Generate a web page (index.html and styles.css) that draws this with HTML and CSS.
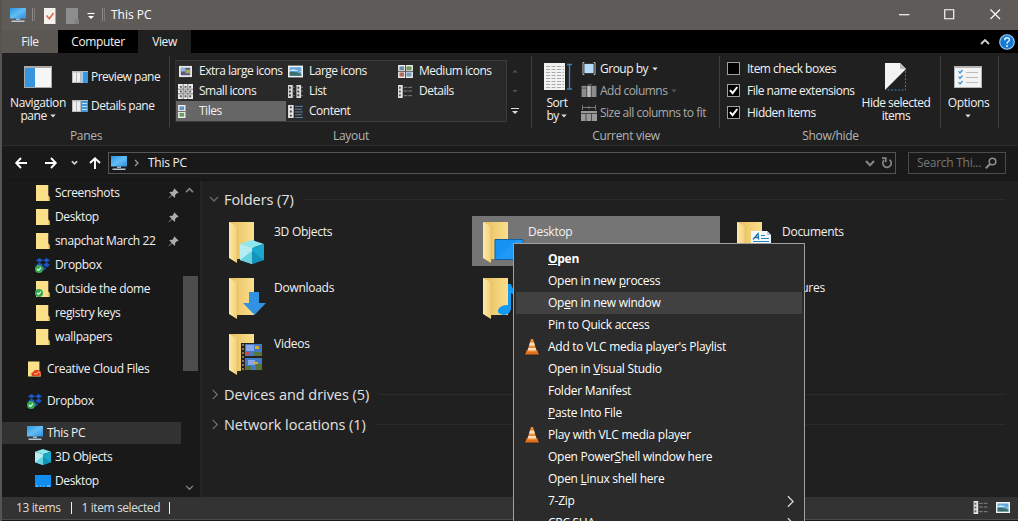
FILE: index.html
```html
<!DOCTYPE html>
<html lang="en">
<head>
<meta charset="utf-8">
<title>This PC</title>
<link rel="stylesheet" href="styles.css">
</head>
<body>
<svg class="defs" aria-hidden="true">
  <defs>
    <linearGradient id="gBlue" x1="0" y1="0" x2="1" y2="1"><stop offset="0" stop-color="#2b95e0"/><stop offset=".5" stop-color="#63bdf5"/><stop offset="1" stop-color="#2c8fdc"/></linearGradient>
    <linearGradient id="gFold" x1="0" y1="0" x2="1" y2="0"><stop offset="0" stop-color="#e6bd5c"/><stop offset="1" stop-color="#fbdf8d"/></linearGradient>
    <linearGradient id="gFlap" x1="0" y1="0" x2="1" y2="0"><stop offset="0" stop-color="#ffe8a6"/><stop offset="1" stop-color="#f3d07b"/></linearGradient>
    <symbol id="pc" viewBox="0 0 16 16"><path fill="url(#gBlue)" d="M0 1h16v10.500H0z"/><path fill="#8fb9d4" d="M6 11.500h4V13H6z"/><path fill="#b8c9d4" d="M1.500 13.500h13V15h-13z"/></symbol>
    <symbol id="folder" viewBox="0 0 14 16"><path fill="#fbe08a" d="M0 0h12.300v10.500L13.500 12v4H0z"/><path fill="#e9c561" d="M11.500 15.500l.8-5 1.200 1.500v4z"/></symbol>
    <symbol id="ok" viewBox="0 0 8 8"><circle cx="4" cy="4" r="4" fill="#39a852"/><path d="M2 4l1.500 1.500L6 2.700" fill="none" stroke="#d8ffe0" stroke-width="1.200"/></symbol>
    <symbol id="dropbox" viewBox="0 0 16 16"><path fill="#1c55c8" d="M4.500 1L8 3.300 4.500 5.600 1 3.300zM11.500 1L15 3.300l-3.500 2.300L8 3.300zM4.500 5.600L8 7.900l-3.500 2.300L1 7.900zM11.500 5.600L15 7.900l-3.500 2.300L8 7.900zM8 9.200l3.500 2.300L8 13.800l-3.500-2.300z"/><use href="#ok" x="0" y="8" width="8" height="8"/></symbol>
    <symbol id="cube" viewBox="0 0 24 24"><path fill="#8be7f0" d="M12 0l12 4-12 4L0 4z"/><path fill="#b5edf3" d="M0 4l12 4v16L0 20z"/><path fill="#19a9cc" d="M24 4L12 8v16l12-4z"/><path fill="#66d3df" d="M0 20l12-9v13z"/><path fill="#0d86ad" d="M24 20l-12-9v13z" opacity=".6"/></symbol>
    <symbol id="desk" viewBox="0 0 16 12"><path fill="#118df0" d="M0 0h16v12H0z"/><path fill="#9bd6ff" d="M1 10.500h2v1H1zm4 0h1v1H5zm3 0h1v1H8zm4 0h3v1h-3z"/></symbol>
    <symbol id="big" viewBox="0 0 36 42"><path fill="url(#gFold)" d="M0 0h25v37H6z"/><path fill="url(#gFlap)" d="M0 0l8 4v37l-8-5z"/><path fill="#d9aa49" d="M7.600 4h.8v35h-.8z" opacity=".4"/></symbol>
    <symbol id="pin" viewBox="0 0 12 12"><path fill="#a9adb2" d="M7 .5L11.500 5l-1 .8-.8-.2-2 2 .2 2-.9.9-2.700-2.700L1 11.300l-.4-.5L3.900 7.400 1.500 5l.9-.9 2 .2 2-2L6.200 1.300z"/></symbol>
    <symbol id="down" viewBox="0 0 6 4"><path d="M.3.500h5.400L3 3.500z" fill="currentColor"/></symbol>
    <symbol id="cv" viewBox="0 0 10 7"><path d="M1 1l4 4 4-4" fill="none" stroke="currentColor" stroke-width="1.500"/></symbol>
    <symbol id="cu" viewBox="0 0 10 7"><path d="M1 6l4-4 4 4" fill="none" stroke="currentColor" stroke-width="1.900"/></symbol>
    <symbol id="cr" viewBox="0 0 8 14"><path d="M1 1l6 6-6 6" fill="none" stroke="currentColor" stroke-width="1.400"/></symbol>
    <symbol id="vlc" viewBox="0 0 14 16"><path fill="#e0701a" d="M1.800 11h10.400L14 15.500H0z"/><path fill="#f08a2c" d="M6 0h2l3.700 12.200q-4.700 1.800-9.400 0z"/><path fill="#f3dcc6" d="M5 3.500h4l1 3.200H4zM3.300 9h7.400l.7 2.400H2.600z"/></symbol>
    <symbol id="list" viewBox="0 0 16 14"><path fill="#dcdcdc" d="M0 0h5v14H0zM9 0h5v14H9z"/><path fill="#444" d="M1 2h2v2H1zm0 4h2v2H1zm0 4h2v2H1zm9-8h2v2h-2zm0 4h2v2h-2zm0 4h2v2h-2z"/><path stroke="#888" d="M5 2.500h2M5 6.500h2M5 11.500h2M14 2.500h2M14 6.500h2M14 11.500h2"/></symbol>
    <symbol id="details" viewBox="0 0 16 14"><path fill="#e4e4e4" d="M0 0h5v14H0z"/><path fill="#666" d="M1 2h2v2H1zm0 4h2v2H1zm0 4h2v2H1z"/><path stroke="#888" stroke-dasharray="4 1" d="M6 2.500h10M6 6.500h10M6 11.500h10"/></symbol>
    <symbol id="photo" viewBox="0 0 14 11"><path fill="#f3f3f3" d="M0 0h14v11H0z"/><path fill="#60a5dc" d="M1.500 1.500h11v8h-11z"/><path fill="#cfe7f5" d="M2 4q4-2 10 2v-1H2z"/><path fill="#3e6e68" d="M1.500 6q5-1 11 2v1.500h-11z"/></symbol>
    <symbol id="cols" viewBox="0 0 16 14"><path fill="#8d8d8d" d="M0 2h16v12H0z"/><path fill="#bcbcbc" d="M6 2h4v12H6z"/><path stroke="#4a4a4a" d="M5.500 2v12M10.500 2v12M0 4.500h5" fill="none"/><path stroke="#666" d="M7 .5h4"/></symbol>
    <symbol id="check" viewBox="0 0 13 13"><path d="M3 6.200l2.600 3L10.300 3" fill="none" stroke="#fff" stroke-width="2"/></symbol>
  </defs>
</svg>

<div class="window">
  <header class="titlebar">
    <svg class="t-pc"><use href="#pc"/></svg>
    <i class="tsep s1"></i>
    <svg class="t-doc" viewBox="0 0 12 16"><path fill="#f4f0ec" d="M0 0h11.500v16H0z"/><path d="M2.500 7.500l2.800 3.300L9.500 5" fill="none" stroke="#d9694a" stroke-width="1.600"/></svg>
    <svg class="t-doc2" viewBox="0 0 14 16"><path fill="#8d8d8d" d="M0 0h12v16H0z"/><path fill="#808080" d="M9 11h4v5H9z"/></svg>
    <svg class="t-drop" viewBox="0 0 8 8"><path stroke="#fff" stroke-width="1.200" d="M.5 1.500h7"/><path fill="#fff" d="M1 4h6L4 7z"/></svg>
    <i class="tsep"></i>
    <span class="title">This PC</span>
    <div class="winbtns">
      <svg viewBox="0 0 11 11"><path stroke="#fff" stroke-width="1.200" d="M0 6h11"/></svg>
      <svg viewBox="0 0 11 11"><path fill="none" stroke="#fff" stroke-width="1.200" d="M.8.800h9.400v9.400H.8z"/></svg>
      <svg viewBox="0 0 11 11"><path stroke="#fff" stroke-width="1.200" d="M.5.500l10 10m0-10l-10 10"/></svg>
    </div>
  </header>

  <nav class="tabs">
    <span class="tab file">File</span><span class="tab computer">Computer</span><span class="tab view">View</span>
    <div class="tabtools">
      <svg class="collapse"><use href="#cu"/></svg>
      <svg class="help" viewBox="0 0 16 16"><circle cx="8" cy="8" r="7.300" fill="#147ad6" stroke="#a6d3f5" stroke-width="1.100"/><path d="M5.700 6.200q0-2.400 2.400-2.400t2.300 2q0 1.100-1.200 1.800T8 9.700" fill="none" stroke="#e8f5ff" stroke-width="1.400"/><circle cx="8" cy="12" r=".9" fill="#fff"/></svg>
    </div>
  </nav>

  <section class="ribbon">
    <div class="group panes">
      <div class="gbody">
        <div class="bigbtn nav">
          <svg class="i-nav" viewBox="0 0 28 22"><path fill="#aaa" d="M0 0h28v22H0z"/><path fill="#f7f7f7" d="M11 2h16v19H11z"/><path fill="#3795dd" d="M1 2h10v19H1z"/></svg>
          <span>Navigation<br>pane <svg class="dd"><use href="#down"/></svg></span>
        </div>
        <div class="pcol">
          <div class="pbtn"><svg class="i-pane" viewBox="0 0 16 12"><path fill="#bbb" d="M0 0h16v12H0z"/><path fill="#eee" d="M1 1.500h3v9.500H1zm4 0h3v9.500H5z"/><path fill="#3c97dc" d="M9 1h7v11H9z"/><path fill="#9dcef2" d="M9 1h2v11H9z"/></svg><span>Preview pane</span></div>
          <div class="pbtn"><svg class="i-pane" viewBox="0 0 16 12"><path fill="#bbb" d="M0 0h16v12H0z"/><path fill="#eee" d="M1 1.500h3v9.500H1zm4 0h3v9.500H5z"/><path fill="#3c97dc" d="M9 1h7v11H9z"/><path stroke="#bfe0f7" d="M10 3.500h5M10 6.500h5M10 9.500h5"/></svg><span>Details pane</span></div>
        </div>
      </div>
      <div class="gname">Panes</div>
    </div>

    <div class="group layout">
      <div class="gbody">
        <div class="gallery">
          <div class="opt"><svg viewBox="0 0 16 14"><path fill="#e8e8e8" d="M1 1h14v12H1z"/><path fill="#555b86" d="M3 3h10v8H3z"/><path fill="#a9a85a" d="M8 5h5v4H8z"/><path fill="#8fb7df" d="M3 3h5v4H3z"/></svg><span>Extra large icons</span></div>
          <div class="opt"><svg><use href="#photo"/></svg><span>Large icons</span></div>
          <div class="opt"><svg viewBox="0 0 16 14"><path fill="#eee" d="M0 0h16v14H0z"/><path fill="#6b8dab" d="M1.500 1.500h5v4h-5z"/><path fill="#70995a" d="M9 1.500h5.500v4H9z"/><path fill="#a96b5b" d="M1.500 8h5v4.500h-5z"/><path fill="#7a9dc0" d="M9 8h5.500v4.500H9z"/><path stroke="#444" d="M8 0v14M0 6.800h16" fill="none"/></svg><span>Medium icons</span></div>
          <div class="opt"><svg class="sm" viewBox="0 0 16 16"><path fill="#ececec" d="M0 0h16v16H0z"/><path stroke="#777" d="M5.500 0v16M10.500 0v16M0 5.500h16M0 10.500h16"/><path fill="#555" d="M2 2h2v2H2zm5 0h2v2H7zm5 0h2v2h-2zM2 7h2v2H2zm5 0h2v2H7zm5 0h2v2h-2zM2 12h2v2H2zm5 0h2v2H7zm5 0h2v2h-2z"/></svg><span>Small icons</span></div>
          <div class="opt"><svg><use href="#list"/></svg><span>List</span></div>
          <div class="opt"><svg><use href="#details"/></svg><span>Details</span></div>
          <div class="opt on"><svg viewBox="0 0 16 14"><path fill="#eee" d="M0 0h8v14H0z"/><path fill="#5e93c4" d="M1.500 1.500h5v4h-5z"/><path fill="#6a9a5e" d="M1.500 8.500h5v4h-5z"/><path stroke="#666" d="M0 7h8"/><path stroke="#777" d="M10 3h4M10 11h4"/></svg><span>Tiles</span></div>
          <div class="opt"><svg viewBox="0 0 16 14"><path fill="#e4e4e4" d="M0 0h6v14H0z"/><path fill="#444" d="M2 1.500h2v2H2zm0 4.500h2v2H2zm0 4.500h2v2H2z"/><path stroke="#5f8cb8" d="M7.500 1.500H16M7.500 4.500H15M7.500 7.500H16M7.500 10.500H15M7.500 13.500H16"/></svg><span>Content</span></div>
        </div>
        <div class="gscroll">
          <svg viewBox="0 0 8 8"><path d="M1.500 5.500L4 3l2.500 2.500z" fill="#555"/></svg>
          <svg viewBox="0 0 8 8"><path d="M1.500 3L4 5.500 6.500 3z" fill="#555"/></svg>
          <svg viewBox="0 0 8 8"><path stroke="#ddd" d="M0 1.500h8"/><path d="M1 4h6L4 7z" fill="#ddd"/></svg>
        </div>
      </div>
      <div class="gname">Layout</div>
    </div>

    <div class="group current">
      <div class="gbody">
        <div class="bigbtn sort">
          <svg class="i-sort" viewBox="0 0 28 28"><path fill="#f2f2ee" d="M0 0h21v27H0z"/><path stroke="#a5abb0" stroke-dasharray="4 1.500" d="M2 3.500h18M2 6.500h18M2 9.500h18M2 12.500h18M2 15.500h18M2 18.500h18M2 21.500h18M2 24.500h18"/><path stroke="#3f86bd" stroke-width="1.300" fill="none" d="M25.500 1v25M23 1.500h5M23 26h5"/></svg>
          <span>Sort<br>by <svg class="dd"><use href="#down"/></svg></span>
        </div>
        <div class="ccol">
          <div class="cbtn"><svg class="i-c" viewBox="0 0 16 14"><path fill="#b6dcf8" d="M3 2h10v10H3z"/><path fill="none" stroke="#ccc" d="M3 .5H1.500v13H3M13 .5h1.500v13H13"/></svg><span>Group by</span><svg class="dd"><use href="#down"/></svg></div>
          <div class="cbtn dim"><svg class="i-c"><use href="#cols"/></svg><span>Add columns</span><svg class="dd faint"><use href="#down"/></svg></div>
          <div class="cbtn dim"><svg class="i-c tall" viewBox="0 0 16 16"><path fill="none" stroke="#777" d="M1 2.500h14M1.500 0v5M14.500 0v5M8 1v3"/><path fill="#999" d="M0 6h16v10H0z"/><path stroke="#4a4a4a" d="M0 8.500h16M5 8v8M10.500 8v8"/></svg><span>Size all columns to fit</span></div>
        </div>
      </div>
      <div class="gname">Current view</div>
    </div>

    <div class="group show">
      <div class="gbody">
        <div class="checks">
          <div class="chk"><i class="box"></i><span>Item check boxes</span></div>
          <div class="chk"><i class="box"><svg><use href="#check"/></svg></i><span>File name extensions</span></div>
          <div class="chk"><i class="box"><svg><use href="#check"/></svg></i><span>Hidden items</span></div>
        </div>
        <div class="bigbtn hide">
          <svg class="i-hide" viewBox="0 0 22 28"><path fill="#f3f3f3" d="M0 0h15l6 6L0 27z"/><path fill="#bbb" d="M15 0v6h6z"/><path fill="none" stroke="#3f79a8" stroke-dasharray="2 1.500" d="M20.500 8v19H1"/></svg>
          <span>Hide selected<br>items</span>
        </div>
      </div>
      <div class="gname">Show/hide</div>
    </div>

    <div class="group options">
      <div class="gbody">
        <div class="bigbtn opts">
          <svg class="i-opt" viewBox="0 0 28 22"><path fill="#b5b5b5" d="M0 0h28v22H0z"/><path fill="#f4f4f4" d="M1 2h26v19H1z"/><path stroke="#3490d6" stroke-width="1.200" fill="none" d="M4.500 5l1.500 2 2.500-3M4.500 10.500l1.500 2 2.500-3M4.500 16l1.500 2L8.500 15"/><path stroke="#bbb" d="M12 6.500h12M12 11.500h12M12 16.500h12"/></svg>
          <span>Options<br><svg class="dd"><use href="#down"/></svg></span>
        </div>
      </div>
    </div>
  </section>

  <section class="address">
    <svg class="a1" viewBox="0 0 12 12"><path fill="none" stroke="#fff" stroke-width="1.900" d="M12 6H1.500M6 1L1.200 6 6 11"/></svg>
    <svg class="a2" viewBox="0 0 12 12"><path fill="none" stroke="#fff" stroke-width="1.900" d="M0 6h10.500M6 1l4.800 5L6 11"/></svg>
    <svg class="a3" viewBox="0 0 8 6"><path fill="none" stroke="#ddd" stroke-width="1.900" d="M1 1l3 3 3-3"/></svg>
    <svg class="a4" viewBox="0 0 12 12"><path fill="none" stroke="#fff" stroke-width="1.900" d="M6 12V1.500M1 6l5-4.800L11 6"/></svg>
    <div class="path">
      <svg class="p-pc"><use href="#pc"/></svg>
      <svg class="p-cr" viewBox="0 0 5 8"><path fill="none" stroke="#999" stroke-width="1.300" d="M1 1l3 3-3 3"/></svg>
      <span>This PC</span>
      <svg class="p-dn" viewBox="0 0 10 7"><path d="M1 1l4 4.300L9 1" fill="none" stroke="#858585" stroke-width="2"/></svg>
      <svg class="p-re" viewBox="0 0 12 12"><path fill="none" stroke="#858585" stroke-width="1.700" d="M8.500 2.700A4.200 4.200 0 1 1 3 3.200M1 1.200h3.800v4"/></svg>
    </div>
    <div class="search"><span>Search Thi...</span><svg viewBox="0 0 12 12"><circle cx="7.500" cy="4.500" r="3.300" fill="none" stroke="#8d8d8d" stroke-width="1.600"/><path stroke="#8d8d8d" stroke-width="2" d="M5 7L.8 11.200"/></svg></div>
  </section>

  <section class="main">
    <aside class="side">
      <div class="tree">
        <div class="node"><svg class="n-f"><use href="#folder"/></svg><span>Screenshots</span><svg class="pin"><use href="#pin"/></svg></div>
        <div class="node"><svg class="n-f"><use href="#folder"/></svg><span>Desktop</span><svg class="pin"><use href="#pin"/></svg></div>
        <div class="node"><svg class="n-f"><use href="#folder"/></svg><span>snapchat March 22</span><svg class="pin"><use href="#pin"/></svg></div>
        <div class="node"><svg class="n-i"><use href="#dropbox"/></svg><span>Dropbox</span></div>
        <div class="node"><svg class="n-i" viewBox="0 0 16 16"><use href="#folder" x="1" width="14" height="16"/><use href="#ok" y="8" width="8" height="8"/></svg><span>Outside the dome</span></div>
        <div class="node"><svg class="n-f"><use href="#folder"/></svg><span>registry keys</span></div>
        <div class="node"><svg class="n-f"><use href="#folder"/></svg><span>wallpapers</span></div>
        <div class="node root"><svg class="n-i" viewBox="0 0 16 16"><use href="#folder" x="1" width="13" height="16"/><path fill="#e2411e" d="M5 15q-2-3 1-4 1-2.500 4-2 4-.5 4 3 0 3-3 3z"/><path fill="none" stroke="#ffc3a0" d="M7 12.500q2 2 3.500-.5t2.500.5"/></svg><span>Creative Cloud Files</span></div>
        <div class="node root"><svg class="n-i"><use href="#dropbox"/></svg><span>Dropbox</span></div>
        <div class="node root sel"><svg class="n-i"><use href="#pc"/></svg><span>This PC</span></div>
        <div class="node"><svg class="n-i"><use href="#cube"/></svg><span>3D Objects</span></div>
        <div class="node"><svg class="n-d"><use href="#desk"/></svg><span>Desktop</span></div>
      </div>
      <div class="sbar"><svg><use href="#cu"/></svg><i class="thumb"></i><svg class="dn"><use href="#cv"/></svg></div>
    </aside>

    <div class="content">
      <div class="head first"><svg class="h-v"><use href="#cv"/></svg><span>Folders (7)</span><i></i></div>
      <div class="tiles">
        <div class="tile"><svg viewBox="0 0 38 42"><use href="#big" width="36" height="42"/><use href="#cube" x="11" y="18" width="24" height="24"/></svg><span>3D Objects</span></div>
        <div class="tile on"><svg viewBox="0 0 38 42"><use href="#big" width="36" height="42"/><path fill="#1592f3" stroke="#0b62a8" d="M12 17.500h28v20H12z"/><path fill="#42b0ff" d="M12.500 37l20-19h7v19z" opacity=".25"/></svg><span>Desktop</span></div>
        <div class="tile"><svg viewBox="0 0 38 42"><use href="#big" width="36" height="42"/><path fill="#f6fafc" d="M14 9h16l4 4v25H14z"/><path fill="#b9cbd5" d="M30 9v4h4z"/><path stroke="#2780b8" d="M24 13.500h4M24 16.500h8M16 19.500h16"/><path stroke="#1a6fae" stroke-width="1.300" fill="none" d="M16 17.500l5-6 .7 6m-3.500-2h3.500"/></svg><span>Documents</span></div>
        <div class="tile"><svg viewBox="0 0 38 42"><use href="#big" width="36" height="42"/><path fill="#3292e2" d="M20 14h10v11h7L25.500 37 14 25h6z"/></svg><span>Downloads</span></div>
        <div class="tile"><svg viewBox="0 0 38 42"><use href="#big" width="36" height="42"/><path fill="#149af2" d="M25 6h3q1 5 6 9 3 4 1 9-1-6-7-9v16q-1 6-8 6-6-1-5-5 2-5 10-5z"/></svg></div>
        <div class="tile"><svg viewBox="0 0 38 42"><use href="#big" width="36" height="42"/></svg><span>Pictures</span></div>
        <div class="tile"><svg viewBox="0 0 38 42"><use href="#big" width="36" height="42"/><path fill="#25211d" d="M12 9h24v28H12z"/><path fill="#4379c9" d="M16 10h17v12H16zm0 14h17v12H16z"/><path fill="#88a8e6" d="M17 11h8v6h-8zm2 15h7v5h-7z"/><path fill="#56743c" d="M25 18h8v4h-8zm-9 14h6v4h-6zm11-2h6v6h-6z"/><path fill="#d8ac2e" d="M26 12h4v3h-4zm-1 16h4v2h-4z"/><path fill="#c54c40" d="M17 18h4v3h-4z"/><path stroke="#a39a7a" stroke-width="1.500" stroke-dasharray="2 2" d="M14 10v27"/></svg><span>Videos</span></div>
      </div>
      <div class="head"><svg class="h-r"><use href="#cr"/></svg><span>Devices and drives (5)</span><i></i></div>
      <div class="head"><svg class="h-r"><use href="#cr"/></svg><span>Network locations (1)</span><i></i></div>
    </div>
  </section>

  <footer class="status">
    <span class="st1">13 items</span><i></i><span class="st2">1 item selected</span><i></i>
    <div class="views"><svg class="v1"><use href="#details"/></svg><svg class="v2"><use href="#photo"/></svg></div>
  </footer>

  <div class="menu">
    <div class="mi"><span><b><u>O</u>pen</b></span></div>
    <div class="mi"><span>Open in new <u>p</u>rocess</span></div>
    <div class="mi hot"><span>Op<u>e</u>n in new window</span></div>
    <div class="mi"><span>Pin to Quick access</span></div>
    <div class="mi"><svg class="vlc"><use href="#vlc"/></svg><span>Add to VLC media player's Playlist</span></div>
    <div class="mi"><span>Open in <u>V</u>isual Studio</span></div>
    <div class="mi"><span>Folder Manifest</span></div>
    <div class="mi"><span><u>P</u>aste Into File</span></div>
    <div class="mi"><svg class="vlc"><use href="#vlc"/></svg><span>Play with VLC media player</span></div>
    <div class="mi"><span>Open Power<u>S</u>hell window here</span></div>
    <div class="mi"><span>Open <u>L</u>inux shell here</span></div>
    <div class="mi"><span>7-Zip</span><svg class="sub"><use href="#cr"/></svg></div>
    <div class="mi"><span>CRC SHA</span><svg class="sub"><use href="#cr"/></svg></div>
  </div>
</div>
</body>
</html>
```

FILE: styles.css
```css
* { box-sizing: border-box; }
body { margin: 0; background: #000; font-family: "Open Sans", "Noto Sans", sans-serif; font-size: 12px; letter-spacing: -0.27px; line-height: 13px; color: #f2f2f2; overflow: hidden; }
svg { display: block; flex: none; overflow: visible; }
i { display: block; flex: none; }
span { white-space: nowrap; }
.defs { position: absolute; width: 0; height: 0; }
.window { position: relative; width: 1018px; height: 521px; overflow: hidden; display: flex; flex-direction: column; background: #191919; border-left: 2px solid #56544c; }

.titlebar { height: 30px; flex: none; display: flex; align-items: center; background: #5f5b58; padding: 0 8px 1px; }
.t-pc { width: 16px; height: 16px; }
.tsep { width: 3px; height: 13px; border-left: 1px solid #8c8986; border-right: 1px solid #7d7a77; }
.s1 { margin: 0 9px 0 6px; }
.t-doc { width: 12px; height: 16px; margin-top: 2px; }
.t-doc2 { width: 14px; height: 16px; margin: 2px 7px 0 10px; }
.t-drop { width: 8px; height: 8px; margin: 2px 7px 0 0; }
.title { margin-left: 6px; letter-spacing: 0; color: #fff; }
.winbtns { margin-left: auto; display: flex; gap: 35px; padding-right: 10px; }
.winbtns svg { width: 10.500px; height: 10.500px; }

.tabs { height: 23px; flex: none; display: flex; background: #000; }
.tab { display: flex; align-items: center; justify-content: center; letter-spacing: -0.4px; }
.file { width: 56px; background: #5b5854; }
.computer { width: 80px; }
.view { width: 53px; background: #202020; }
.tabtools { margin-left: auto; display: flex; align-items: center; gap: 9px; padding-right: 3px; }
.collapse { width: 10px; height: 7px; color: #ccc; }
.help { width: 16px; height: 16px; }

.ribbon { height: 93px; flex: none; display: flex; background: #202020; border-bottom: 1px solid #2c2c2c; letter-spacing: -0.5px; }
.group { display: flex; flex-direction: column; height: 92px; padding-top: 3px; }
.gbody { display: flex; height: 72px; border-right: 1px solid #3e3e3e; }
.gname { height: 15px; display: flex; justify-content: center; align-items: center; color: #b4b4b4; letter-spacing: -0.3px; }
.panes { width: 168px; }
.layout { width: 362px; }
.current { width: 188px; }
.show { width: 221px; }
.options { width: 58px; }
.bigbtn { display: flex; flex-direction: column; align-items: center; text-align: center; }
.bigbtn > span { display: block; }
.dd { display: inline-block; width: 6px; height: 4px; vertical-align: 2px; color: #e0e0e0; }
.faint { color: #555; }
.nav { width: 72px; padding-top: 10px; letter-spacing: -0.4px; }
.i-nav { width: 28px; height: 22px; margin-bottom: 8px; }
.pcol { display: flex; flex-direction: column; gap: 16px; padding-top: 14px; margin-left: -2px; }
.pbtn { display: flex; align-items: center; gap: 3px; height: 13px; }
.i-pane { width: 16px; height: 12px; }
.gallery { display: grid; grid-template-columns: 110px 110px 110px; grid-auto-rows: 20px; margin: 4px 0 0 5px; width: 332px; height: 62px; border: 1px solid #3b3b3b; border-left-color: #303030; background: #292929; }
.opt { display: flex; align-items: center; gap: 6px; padding-left: 2px; }
.opt svg { width: 15px; height: 13px; }
.opt span { margin-bottom: 1px; }
.opt .sm { height: 15px; }
.on { background: #666; }
.gscroll { display: flex; flex-direction: column; gap: 12px; margin: 11px 0 0 4px; }
.gscroll svg { width: 8px; height: 8px; }
.sort { width: 50px; padding-top: 7px; }
.i-sort { width: 28px; height: 28px; margin: 0 0 5px 2px; }
.ccol { display: flex; flex-direction: column; gap: 9px; padding-top: 6px; margin-left: -1px; }
.cbtn { display: flex; align-items: center; gap: 3px; height: 13px; }
.cbtn .dd { margin-left: 1px; }
.i-c { width: 16px; height: 13px; }
.tall { height: 16px; }
.dim { color: #aaa; }
.checks { display: flex; flex-direction: column; gap: 9px; padding: 6px 0 0 7px; width: 141px; }
.chk { display: flex; align-items: center; gap: 7px; height: 13px; }
.box { width: 13px; height: 13px; border: 1px solid #a0a0a0; background: #000; }
.box svg { width: 13px; height: 13px; margin: -1px; }
.hide { width: 70px; padding-top: 7px; }
.i-hide { width: 22px; height: 28px; margin-bottom: 5px; }
.opts { width: 55px; padding-top: 10px; letter-spacing: -0.4px; }
.i-opt { width: 28px; height: 22px; margin: 0 0 8px -1px; }

.address { height: 35px; flex: none; display: flex; align-items: center; padding: 0 10px 0 13px; border-bottom: 1px solid #151515; }
.a1, .a2, .a4 { width: 12px; height: 12px; }
.a2 { margin: 0 14px 0 18px; }
.a3 { width: 7px; height: 6px; }
.a4 { margin: 0 7px 0 11px; }
.path { width: 788px; height: 22px; border: 1px solid #555; display: flex; align-items: center; padding-left: 2px; }
.path span, .search span { margin-bottom: 1px; }
.p-pc { width: 16px; height: 16px; }
.p-cr { width: 5px; height: 8px; margin: 0 9px 0 7px; }
.p-dn { width: 10px; height: 7px; margin-left: auto; }
.p-re { width: 12px; height: 12px; margin: 0 2px 0 6px; }
.search { width: 98px; height: 22px; margin-left: 12px; border: 1px solid #4b4b4b; display: flex; align-items: center; padding-left: 8px; color: #777; }
.search svg { width: 12px; height: 12px; margin: 0 8px 0 auto; }

.main { flex: 1; display: flex; min-height: 0; }
.side { width: 200px; display: flex; border-right: 2px solid #252525; letter-spacing: -0.35px; }
.tree { width: 179px; }
.node { height: 24px; display: flex; align-items: center; padding-left: 33px; }
.node span, .mi span { margin-bottom: 2px; }
.root { margin-top: 8px; padding-left: 25px; }
.sel { background: #323232; border: 0 solid #191919; border-width: 1px 0; background-clip: padding-box; }
.n-f { width: 14px; height: 16px; margin: 0 5px 0 1px; }
.n-i { width: 16px; height: 16px; margin: 0 4px 0 0; }
.n-d { width: 16px; height: 12px; margin: 0 4px 0 0; }
.pin { width: 11px; height: 11px; margin: 0 2px 0 auto; }
.sbar { width: 17px; display: flex; flex-direction: column; align-items: center; color: #858585; padding: 6px 0 6px; }
.sbar svg { width: 9px; height: 6px; }
.thumb { width: 15px; height: 95px; background: #4d4d4d; margin-top: 83px; margin-left: 1px; }
.sbar .dn { margin-top: auto; }

.content { flex: 1; background: #202020; padding-left: 7px; }
.head { display: flex; align-items: center; height: 30px; font-size: 14.500px; letter-spacing: -0.05px; color: #e2e2e2; }
.first { height: 36px; }
.head i { flex: 1; height: 1px; background: #2b2b2b; margin: 0 12px 0 10px; }
.h-v { width: 10px; height: 7px; margin-right: 5px; color: #666; }
.h-r { width: 6px; height: 11px; margin: 0 6px 0 3px; color: #888; }
.tiles { display: grid; grid-template-columns: 248px 248px 248px; grid-auto-rows: 50px; gap: 6px; margin: -1px 0 1px 9px; }
.tile { display: flex; padding: 6px 0 0 11px; }
.tile.on { background: #757575; }
.tile svg { width: 38px; height: 42px; margin-right: 7px; }
.tile span { padding-top: 3px; }

.status { height: 23px; flex: none; display: flex; align-items: center; background: #333; border-bottom: 1px solid #4c4c4c; padding: 0 8px 1px 14px; margin-bottom: 1px; color: #ddd; letter-spacing: -0.4px; }
.status > i { width: 1px; height: 12px; background: #f0f0f0; }
.st1 { margin-right: 10px; }
.st2 { margin: 0 9px 0 10px; }
.views { margin-left: auto; display: flex; align-items: center; gap: 7px; }
.v1 { width: 16px; height: 13px; }
.v2 { width: 14px; height: 11px; }

.menu { position: absolute; left: 511px; top: 243px; width: 292px; height: 296px; background: #2b2b2b; border: 1px solid #a0a0a0; padding: 4px 2px; color: #fff; }
.mi { height: 22px; display: flex; align-items: center; padding-left: 32px; }
.hot { background: #414141; }
.mi u { text-underline-offset: 1px; }
.vlc { width: 14px; height: 16px; margin: 0 9px 0 -23px; }
.sub { width: 7px; height: 13px; margin: 0 8px 0 auto; color: #ddd; }
```
